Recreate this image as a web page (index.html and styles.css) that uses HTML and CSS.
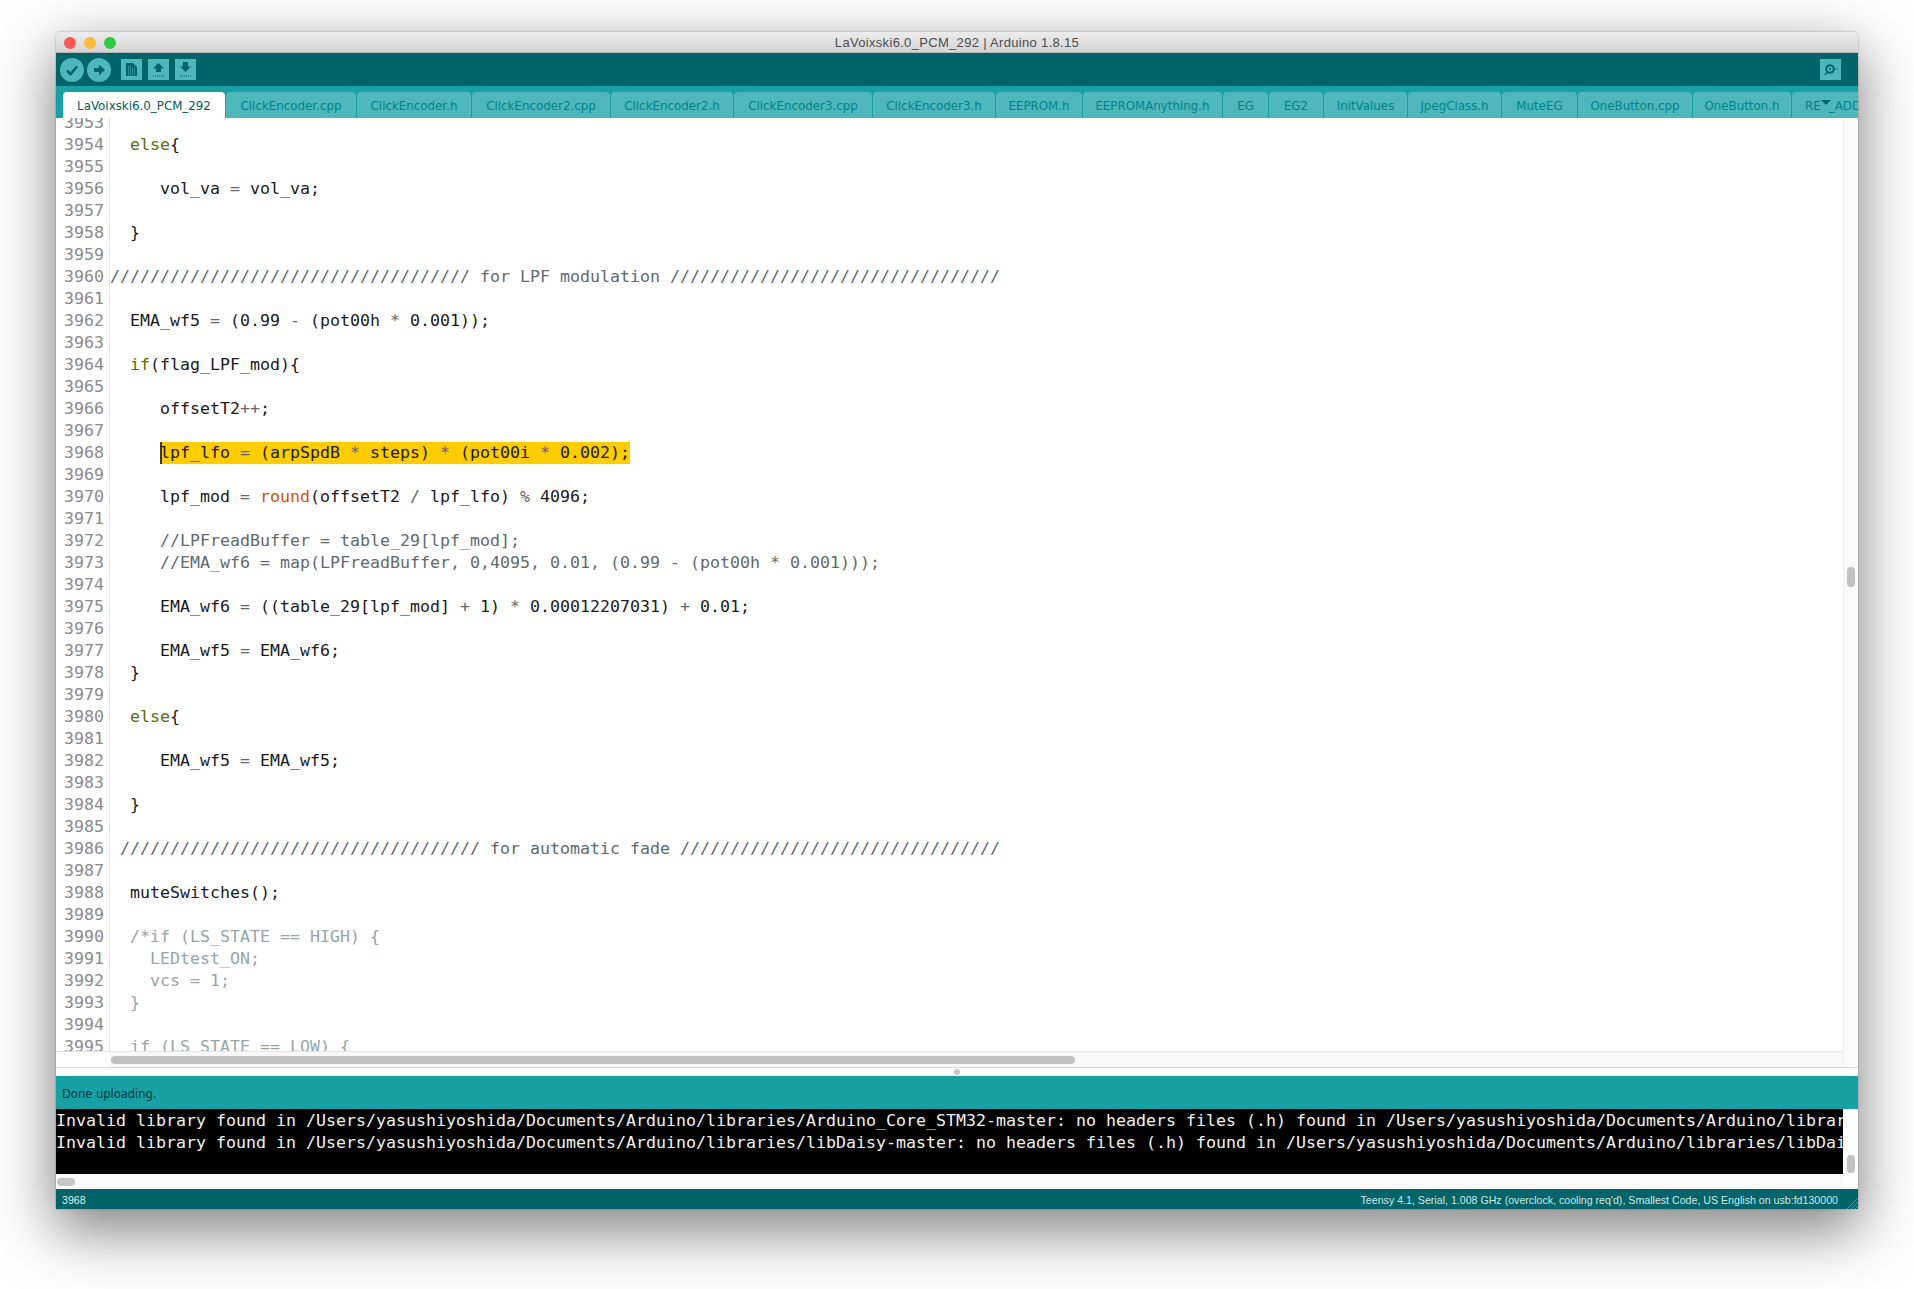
FILE: index.html
```html
<!DOCTYPE html>
<html lang="en">
<head>
<meta charset="utf-8">
<title>LaVoixski6.0_PCM_292 | Arduino 1.8.15</title>
<link rel="stylesheet" href="styles.css">
</head>
<body>
<div class="window">
  <header class="titlebar">
    <div class="lights"><i class="light red"></i><i class="light amber"></i><i class="light green"></i></div>
    <span class="title">LaVoixski6.0_PCM_292 | Arduino 1.8.15</span>
  </header>
  <div class="toolbar">
    <svg class="round" viewBox="0 0 24 24"><circle cx="12" cy="12" r="12"/><path class="ink-line" d="M7 12.5l3.5 3.5L17 8.5"/></svg>
    <svg class="round" viewBox="0 0 24 24"><circle cx="12" cy="12" r="12"/><path class="ink" d="M7 10h5V6.5l6 5.5-6 5.5V14H7z"/></svg>
    <svg class="square first" viewBox="0 0 21 21"><rect class="pad" width="21" height="21"/><path class="ink" d="M5 4h7l4 4v9H5z"/><path class="dots" d="M7 8h3M7 10h7M7 12h7M7 14h7M7 16h7"/></svg>
    <svg class="square" viewBox="0 0 21 21"><rect class="pad" width="21" height="21"/><path class="ink" d="M10.500 4l5.500 5.500h-3V13H8V9.500H5z"/><path class="dots dark" d="M5 17h11"/></svg>
    <svg class="square" viewBox="0 0 21 21"><rect class="pad" width="21" height="21"/><path class="ink" d="M8 3h5v4.500h3L10.500 13 5 7.500h3z"/><path class="dots dark" d="M5 17h11"/></svg>
    <svg class="square serial" viewBox="0 0 21 21"><rect class="pad" width="21" height="21"/><circle class="lens" cx="10" cy="10" r="3.800"/><circle class="ink" cx="10" cy="10" r="1"/><path class="lens thin" d="M7 13.500l-2 2.500"/><path class="dots dark" d="M15 10h3"/></svg>
  </div>
  <nav class="tabs">
    <div class="tab active">LaVoixski6.0_PCM_292</div>
    <div class="tab">ClickEncoder.cpp</div>
    <div class="tab">ClickEncoder.h</div>
    <div class="tab">ClickEncoder2.cpp</div>
    <div class="tab">ClickEncoder2.h</div>
    <div class="tab">ClickEncoder3.cpp</div>
    <div class="tab">ClickEncoder3.h</div>
    <div class="tab">EEPROM.h</div>
    <div class="tab">EEPROMAnything.h</div>
    <div class="tab">EG</div>
    <div class="tab">EG2</div>
    <div class="tab">InitValues</div>
    <div class="tab">JpegClass.h</div>
    <div class="tab">MuteEG</div>
    <div class="tab">OneButton.cpp</div>
    <div class="tab">OneButton.h</div>
    <div class="tab clipped">RE<span class="hidden-char">V</span>_ADD</div>
    <svg class="tab-menu" viewBox="0 0 10 5"><path d="M0 0h10L5 5z"/></svg>
  </nav>
  <div class="main">
    <div class="editor">
      <div class="code">
        <div class="line"><span class="num">3953</span><span class="src"></span></div>
        <div class="line"><span class="num">3954</span><span class="src">  <b class="kw">else</b>{</span></div>
        <div class="line"><span class="num">3955</span><span class="src"></span></div>
        <div class="line"><span class="num">3956</span><span class="src">     vol_va <b class="op">=</b> vol_va;</span></div>
        <div class="line"><span class="num">3957</span><span class="src"></span></div>
        <div class="line"><span class="num">3958</span><span class="src">  }</span></div>
        <div class="line"><span class="num">3959</span><span class="src"></span></div>
        <div class="line"><span class="num">3960</span><span class="src"><b class="cm">//////////////////////////////////// for LPF modulation /////////////////////////////////</b></span></div>
        <div class="line"><span class="num">3961</span><span class="src"></span></div>
        <div class="line"><span class="num">3962</span><span class="src">  EMA_wf5 <b class="op">=</b> (0.99 <b class="op">-</b> (pot00h <b class="op">*</b> 0.001));</span></div>
        <div class="line"><span class="num">3963</span><span class="src"></span></div>
        <div class="line"><span class="num">3964</span><span class="src">  <b class="kw">if</b>(flag_LPF_mod){</span></div>
        <div class="line"><span class="num">3965</span><span class="src"></span></div>
        <div class="line"><span class="num">3966</span><span class="src">     offsetT2<b class="op">++</b>;</span></div>
        <div class="line"><span class="num">3967</span><span class="src"></span></div>
        <div class="line"><span class="num">3968</span><span class="src">     <span class="hit">lpf_lfo <b class="op">=</b> (arpSpdB <b class="op">*</b> steps) <b class="op">*</b> (pot00i <b class="op">*</b> 0.002);</span></span></div>
        <div class="line"><span class="num">3969</span><span class="src"></span></div>
        <div class="line"><span class="num">3970</span><span class="src">     lpf_mod <b class="op">=</b> <b class="fn">round</b>(offsetT2 <b class="op">/</b> lpf_lfo) <b class="op">%</b> 4096;</span></div>
        <div class="line"><span class="num">3971</span><span class="src"></span></div>
        <div class="line"><span class="num">3972</span><span class="src">     <b class="cm">//LPFreadBuffer = table_29[lpf_mod];</b></span></div>
        <div class="line"><span class="num">3973</span><span class="src">     <b class="cm">//EMA_wf6 = map(LPFreadBuffer, 0,4095, 0.01, (0.99 - (pot00h * 0.001)));</b></span></div>
        <div class="line"><span class="num">3974</span><span class="src"></span></div>
        <div class="line"><span class="num">3975</span><span class="src">     EMA_wf6 <b class="op">=</b> ((table_29[lpf_mod] <b class="op">+</b> 1) <b class="op">*</b> 0.00012207031) <b class="op">+</b> 0.01;</span></div>
        <div class="line"><span class="num">3976</span><span class="src"></span></div>
        <div class="line"><span class="num">3977</span><span class="src">     EMA_wf5 <b class="op">=</b> EMA_wf6;</span></div>
        <div class="line"><span class="num">3978</span><span class="src">  }</span></div>
        <div class="line"><span class="num">3979</span><span class="src"></span></div>
        <div class="line"><span class="num">3980</span><span class="src">  <b class="kw">else</b>{</span></div>
        <div class="line"><span class="num">3981</span><span class="src"></span></div>
        <div class="line"><span class="num">3982</span><span class="src">     EMA_wf5 <b class="op">=</b> EMA_wf5;</span></div>
        <div class="line"><span class="num">3983</span><span class="src"></span></div>
        <div class="line"><span class="num">3984</span><span class="src">  }</span></div>
        <div class="line"><span class="num">3985</span><span class="src"></span></div>
        <div class="line"><span class="num">3986</span><span class="src"> <b class="cm">//////////////////////////////////// for automatic fade ////////////////////////////////</b></span></div>
        <div class="line"><span class="num">3987</span><span class="src"></span></div>
        <div class="line"><span class="num">3988</span><span class="src">  muteSwitches();</span></div>
        <div class="line"><span class="num">3989</span><span class="src"></span></div>
        <div class="line"><span class="num">3990</span><span class="src">  <b class="bc">/*if (LS_STATE == HIGH) {</b></span></div>
        <div class="line"><span class="num">3991</span><span class="src">    <b class="bc">LEDtest_ON;</b></span></div>
        <div class="line"><span class="num">3992</span><span class="src">    <b class="bc">vcs = 1;</b></span></div>
        <div class="line"><span class="num">3993</span><span class="src">  <b class="bc">}</b></span></div>
        <div class="line"><span class="num">3994</span><span class="src"></span></div>
        <div class="line"><span class="num">3995</span><span class="src">  <b class="bc">if (LS_STATE == LOW) {</b></span></div>
      </div>
      <div class="hbar"><div class="hbar-gutter"></div><div class="hbar-track"><div class="hthumb"></div></div></div>
    </div>
    <div class="vbar"><div class="vthumb"></div></div>
  </div>
  <div class="split"><i class="split-dot"></i></div>
  <div class="message">Done uploading.</div>
  <div class="console-row">
    <pre class="console">Invalid library found in /Users/yasushiyoshida/Documents/Arduino/libraries/Arduino_Core_STM32-master: no headers files (.h) found in /Users/yasushiyoshida/Documents/Arduino/libraries/Arduino_Core_STM32-master
Invalid library found in /Users/yasushiyoshida/Documents/Arduino/libraries/libDaisy-master: no headers files (.h) found in /Users/yasushiyoshida/Documents/Arduino/libraries/libDaisy-master</pre>
    <div class="console-vbar"><div class="console-vthumb"></div></div>
  </div>
  <div class="console-hbar"><div class="console-htrack"><div class="console-hthumb"></div></div></div>
  <footer class="status">
    <span>3968</span>
    <span class="board">Teensy 4.1, Serial, 1.008 GHz (overclock, cooling req'd), Smallest Code, US English on usb:fd130000</span>
    <svg class="grip" viewBox="0 0 12 12"><path d="M12 1L1 12M12 5L5 12M12 9L9 12"/></svg>
  </footer>
</div>
</body>
</html>
```
FILE: styles.css
```css
* { box-sizing: border-box; }
html, body { margin: 0; height: 100%; background: #fff; overflow: hidden; }
body { padding: 32px 0 0 56px; }
b { font-weight: normal; }

.window {
  width: 1802px;
  height: 1177px;
  display: flex;
  flex-direction: column;
  background: #fff;
  border-radius: 5px 5px 0 0;
  box-shadow: 0 20px 60px 2px rgba(0,0,0,.5), 0 0 2px rgba(0,0,0,.35);
}

.titlebar {
  height: 21px;
  flex: none;
  display: flex;
  align-items: center;
  justify-content: center;
  position: relative;
  padding-top: 1px;
  background: linear-gradient(#ececec, #d4d4d4);
  border-radius: 5px 5px 0 0;
  border-bottom: 1px solid #b5b5b5;
}
.lights { position: absolute; left: 8px; top: 5px; display: flex; gap: 8px; }
.light { width: 12px; height: 12px; border-radius: 50%; display: block; }
.red { background: #fc5753; }
.amber { background: #fdbc40; }
.green { background: #33c748; }
.title { font: 13px "Liberation Sans", sans-serif; letter-spacing: .32px; color: #4d4d4d; }

.toolbar {
  height: 33px;
  flex: none;
  display: flex;
  align-items: center;
  padding-left: 4px;
  gap: 3px;
  background: #006468;
}
.round { width: 24px; height: 24px; fill: #4db7bb; }
.square { width: 21px; height: 21px; margin-left: 3px; }
.square.first { margin-left: 7px; }
.square.serial { margin-left: auto; margin-right: 17px; }
.pad { fill: #4db7bb; }
.ink { fill: #006468; stroke: none; }
.ink-line { fill: none; stroke: #006468; stroke-width: 2.600; }
.dots { fill: none; stroke: #4db7bb; stroke-width: 1; stroke-dasharray: 1 1; }
.dots.dark { stroke: #006468; }
.lens { fill: none; stroke: #006468; stroke-width: 2; }
.lens.thin { stroke-width: 1.500; }

.tabs {
  height: 32px;
  flex: none;
  position: relative;
  overflow: hidden;
  display: grid;
  grid-template-columns: 162px 130px 114px 138px 122px 138px 122px 86px 139px 45px 54px 83px 93px 75px 114px 98px 80px;
  column-gap: 1px;
  padding: 6px 0 0 7px;
  background: #17a1a5;
}
.tab {
  height: 26px;
  display: flex;
  align-items: center;
  justify-content: center;
  padding-top: 1px;
  white-space: nowrap;
  background: #4db7bb;
  border-radius: 4px 4px 0 0;
  font: 11.850px "DejaVu Sans", sans-serif;
  color: #00868a;
}
.tab.active { background: #fff; color: #005c5f; }
.tab.clipped { justify-content: flex-start; padding-left: 13px; }
.hidden-char { visibility: hidden; }
.tab-menu { position: absolute; left: 1765px; top: 14px; width: 10px; height: 5px; fill: #006468; }

.main { height: 949px; flex: none; display: flex; }
.editor { width: 1787px; flex: none; display: flex; flex-direction: column; }
.code {
  height: 934px;
  flex: none;
  overflow: hidden;
  font: 16.610px/22px "DejaVu Sans Mono", monospace;
  color: #1a1a1a;
  background: #fff;
  border-bottom: 1px solid #e4e4e4;
}
.line { height: 22px; display: flex; white-space: pre; }
.line:first-child { margin-top: -6px; }
.num {
  width: 54px;
  flex: none;
  padding-right: 5px;
  text-align: right;
  color: #8a8a8a;
  border-right: 1px solid #e4e4e4;
}
.src { padding-left: 0; }
.kw { color: #5e6d03; }
.fn { color: #d35400; }
.op { color: #5f686c; }
.cm { color: #5f6a6c; }
.bc { color: #95a5a6; }
.hit { display: inline-block; height: 22px; background: #ffcc00; box-shadow: inset 2px 0 #3b3b20; }

.hbar { height: 15px; flex: none; display: flex; }
.hbar-gutter { width: 54px; flex: none; background: #fff; }
.hbar-track { flex: 1; background: #f8f8f8; padding: 4px 0 0 1px; }
.hthumb { width: 964px; height: 8px; border-radius: 4px; background: #c1c1c1; }

.vbar { flex: 1; background: #fafafa; border-left: 1px solid #efefef; padding: 449px 0 0 3px; }
.vthumb { width: 8px; height: 20px; border-radius: 4px; background: #c1c1c1; }

.split {
  height: 9px;
  flex: none;
  display: flex;
  align-items: center;
  justify-content: center;
  border-top: 1px solid #d9d9d9;
  background: #fff;
}
.split-dot { width: 6px; height: 6px; border-radius: 50%; background: #c4c4c4; display: block; }

.message {
  height: 33px;
  flex: none;
  display: flex;
  align-items: center;
  padding: 2px 0 0 6px;
  background: #17a1a5;
  font: 11.500px "DejaVu Sans", sans-serif;
  color: #00383b;
}

.console-row { height: 65px; flex: none; display: flex; }
.console {
  width: 1787px;
  flex: none;
  margin: 0;
  padding-top: 1px;
  overflow: hidden;
  background: #000;
  color: #f2f2f2;
  font: 16.610px/22px "DejaVu Sans Mono", monospace;
}
.console-vbar { flex: 1; background: #fff; padding: 46px 0 0 4px; }
.console-vthumb { width: 8px; height: 18px; border-radius: 4px; background: #c1c1c1; }

.console-hbar { height: 15px; flex: none; background: #fff; }
.console-htrack { width: 1787px; height: 15px; background: #fafafa; padding: 4px 0 0 1px; }
.console-hthumb { width: 18px; height: 8px; border-radius: 4px; background: #c8c8c8; }

.status {
  height: 20px;
  flex: none;
  position: relative;
  display: flex;
  align-items: center;
  justify-content: space-between;
  padding: 1px 20px 0 6px;
  background: #006468;
  color: #e0eeee;
  font: 10.630px "Liberation Sans", sans-serif;
}
.board { color: #d2e6e6; }
.grip { position: absolute; right: 0; bottom: 0; width: 12px; height: 12px; fill: none; stroke: #4d9a9d; stroke-width: 1; }
```
